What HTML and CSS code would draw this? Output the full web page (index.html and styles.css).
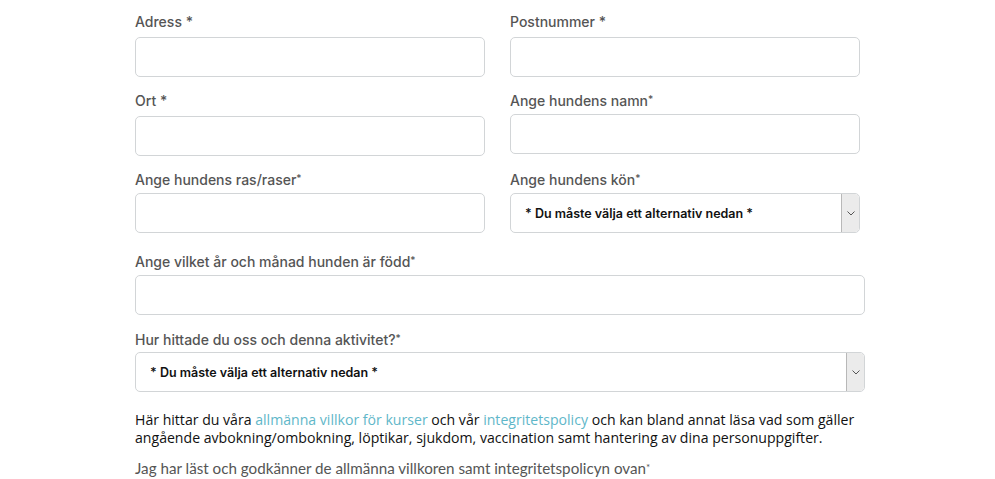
FILE: index.html
```html
<!DOCTYPE html>
<html lang="sv">
<head>
<meta charset="utf-8">
<link rel="stylesheet" href="styles.css">
</head>
<body>
<form class="form">
  <div class="grid">
    <div class="field">
      <label class="label">Adress *</label>
      <div class="input"></div>
    </div>
    <div class="field">
      <label class="label">Postnummer *</label>
      <div class="input"></div>
    </div>
    <div class="field">
      <label class="label">Ort *</label>
      <div class="input"></div>
    </div>
    <div class="field up">
      <label class="label">Ange hundens namn<span class="star">*</span></label>
      <div class="input"></div>
    </div>
    <div class="field r3">
      <label class="label">Ange hundens ras/raser<span class="star">*</span></label>
      <div class="input"></div>
    </div>
    <div class="field r3">
      <label class="label">Ange hundens kön<span class="star">*</span></label>
      <div class="select narrow">
        <span class="select-text">* Du måste välja ett alternativ nedan *</span>
        <span class="arrow"><svg width="8" height="5" viewBox="0 0 8 5"><path d="M0.5 0.5 L4 4 L7.5 0.5" fill="none" stroke="#555" stroke-width="1"/></svg></span>
      </div>
    </div>
  </div>
  <div class="field full born">
    <label class="label">Ange vilket år och månad hunden är född<span class="star">*</span></label>
    <div class="input"></div>
  </div>
  <div class="field full found">
    <label class="label">Hur hittade du oss och denna aktivitet?<span class="star">*</span></label>
    <div class="select">
      <span class="select-text">* Du måste välja ett alternativ nedan *</span>
      <span class="arrow"><svg width="8" height="5" viewBox="0 0 8 5"><path d="M0.5 0.5 L4 4 L7.5 0.5" fill="none" stroke="#555" stroke-width="1"/></svg></span>
    </div>
  </div>
  <p class="terms">Här hittar du våra <a class="link" href="#">allmänna villkor för kurser</a> och vår <a class="link" href="#">integritetspolicy</a> och kan bland annat läsa vad som gäller angående avbokning/ombokning, löptikar, sjukdom, vaccination samt hantering av dina personuppgifter.</p>
  <p class="accept">Jag har läst och godkänner de allmänna villkoren samt integritetspolicyn ovan<span class="star">*</span></p>
</form>
</body>
</html>
```
FILE: styles.css
```css
html, body {
  margin: 0;
  padding: 0;
  background: #fff;
}
.form {
  width: 730px;
  margin-left: 135px;
  padding-top: 12px;
  font-family: "Inter", sans-serif;
}
.grid {
  display: grid;
  grid-template-columns: 350px 350px;
  column-gap: 25px;
  row-gap: 14px;
}
.field {
  display: flex;
  flex-direction: column;
}
.up { margin-top: -2px; }
.r3 { margin-top: -2px; }
.label {
  font-size: 14px;
  font-weight: 500;
  line-height: 20px;
  height: 20px;
  color: #555;
  margin-bottom: 5px;
}
.star {
  font-size: 10px;
  vertical-align: 3px;
}
.input {
  height: 38px;
  border: 1px solid #d2d5d7;
  border-radius: 5px;
  background: #fff;
}
.full { width: 730px; }
.born { margin-top: 17px; }
.found { margin-top: 13px; }
.found .label { margin-bottom: 4px; }
.select {
  height: 38px;
  border: 1px solid #d2d5d7;
  border-radius: 5px;
  display: flex;
  align-items: center;
  justify-content: space-between;
  background: #fff;
  overflow: hidden;
}
.narrow { width: 348px; }
.select-text {
  padding-left: 14px;
  font-size: 12.5px;
  font-weight: 600;
  color: #111;
}
.arrow {
  width: 17px;
  height: 38px;
  border-left: 1px solid #b8b8b8;
  background: #ebebeb;
  display: flex;
  align-items: center;
  justify-content: center;
  border-radius: 0 4px 4px 0;
}
.terms {
  margin: 19px 0 0;
  font-family: "Open Sans", sans-serif;
  font-size: 14.1px;
  font-weight: 500;
  line-height: 18px;
  color: #111;
}
.link {
  color: #5fb7c9;
  text-decoration: none;
}
.accept {
  margin: 10px 0 0;
  font-family: "Lato", sans-serif;
  font-size: 15.2px;
  line-height: 20px;
  color: #555;
}
```
